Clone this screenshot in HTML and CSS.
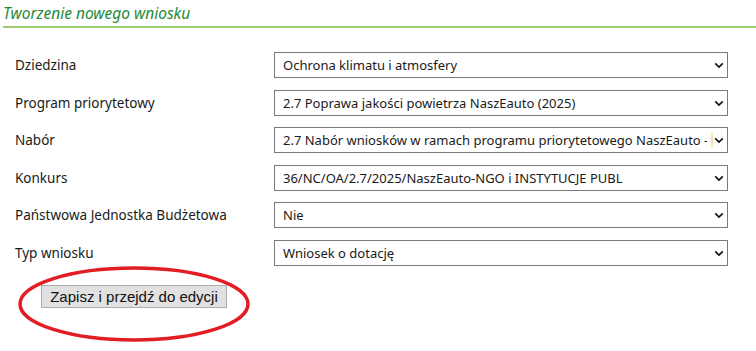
FILE: index.html
```html
<!DOCTYPE html>
<html lang="pl">
<head>
    <meta charset="UTF-8">
    <title>Tworzenie nowego wniosku</title>
    <link rel="stylesheet" href="styles.css">
</head>
<body>
    <h1 class="title">Tworzenie nowego wniosku</h1>

    <form class="form">
        <label class="label" for="dziedzina">Dziedzina</label>
        <div class="field">
            <select id="dziedzina"><option>Ochrona klimatu i atmosfery</option></select>
            <svg class="chevron" viewBox="0 0 12 8"><path d="M1.5 1.5 6 6 10.5 1.5"/></svg>
        </div>

        <label class="label" for="program">Program priorytetowy</label>
        <div class="field">
            <select id="program"><option>2.7 Poprawa jakości powietrza NaszEauto (2025)</option></select>
            <svg class="chevron" viewBox="0 0 12 8"><path d="M1.5 1.5 6 6 10.5 1.5"/></svg>
        </div>

        <label class="label" for="nabor">Nabór</label>
        <div class="field">
            <select id="nabor"><option>2.7 Nabór wniosków w ramach programu priorytetowego NaszEauto - NGO i INSTYTUCJE PUBLICZNE</option></select>
            <span class="cut"></span>
            <svg class="chevron" viewBox="0 0 12 8"><path d="M1.5 1.5 6 6 10.5 1.5"/></svg>
        </div>

        <label class="label" for="konkurs">Konkurs</label>
        <div class="field">
            <select id="konkurs"><option>36/NC/OA/2.7/2025/NaszEauto-NGO i INSTYTUCJE PUBL</option></select>
            <svg class="chevron" viewBox="0 0 12 8"><path d="M1.5 1.5 6 6 10.5 1.5"/></svg>
        </div>

        <label class="label" for="pjb">Państwowa Jednostka Budżetowa</label>
        <div class="field">
            <select id="pjb"><option>Nie</option></select>
            <svg class="chevron" viewBox="0 0 12 8"><path d="M1.5 1.5 6 6 10.5 1.5"/></svg>
        </div>

        <label class="label" for="typ">Typ wniosku</label>
        <div class="field">
            <select id="typ"><option>Wniosek o dotację</option></select>
            <svg class="chevron" viewBox="0 0 12 8"><path d="M1.5 1.5 6 6 10.5 1.5"/></svg>
        </div>
    </form>

    <div class="actions">
        <button type="button" class="save">Zapisz i przejdź do edycji</button>
        <svg class="ring" viewBox="0 0 234 78"><ellipse cx="117" cy="39" rx="114" ry="36"/></svg>
    </div>
</body>
</html>
```

FILE: styles.css
```css
html, body {
    min-height: 351px;
}

body {
    margin: 0;
    background: #ffffff;
    color: #1a1a1a;
    font-family: "Noto Sans", "Open Sans", sans-serif;
    font-size: 13px;
}

.title {
    margin: 0 0 0 3px;
    padding: 4px 0 3px 0;
    font-family: "Noto Sans", sans-serif;
    font-style: italic;
    font-weight: normal;
    font-size: 15.5px;
    line-height: 19px;
    color: #1f8a3a;
    border-bottom: 2px solid #a2cc72; /* zielona linia */
}

.form {
    display: grid;
    grid-template-columns: 259px 454px;
    row-gap: 11.5px;
    padding: 24px 0 0 15px;
}

.label {
    display: flex;
    align-items: center;
    height: 26px;
    font-size: 13.5px;
}

.field {
    position: relative;
    height: 26px;
}

.field select {
    appearance: none;
    -webkit-appearance: none;
    width: 100%;
    height: 26px;
    margin: 0;
    padding: 0 20px 0 8px;
    border: 1px solid #7a7a7a;
    border-radius: 0;
    background: #ffffff;
    color: #1a1a1a;
    font-family: "Noto Sans", "Open Sans", sans-serif;
    font-size: 13px;
}

.cut {
    position: absolute;
    right: 15px;
    top: 6px;
    width: 2px;
    height: 14px;
    background: #fbe2a8;
}

.chevron {
    position: absolute;
    right: 4px;
    top: 10px;
    width: 10px;
    height: 7px;
    fill: none;
    stroke: #111111;
    stroke-width: 2;
}

.actions {
    position: relative;
    padding: 19px 0 40px 41px;
}

.save {
    width: 186px;
    height: 23px;
    padding: 0;
    background: #e1e1e1;
    border: 1px solid #adadad;
    border-radius: 0;
    color: #111111;
    font-family: "Liberation Sans", Arial, sans-serif;
    font-size: 15px;
}

.ring {
    position: absolute;
    left: 17px;
    top: -1px;
    width: 234px;
    height: 78px;
    fill: none;
    stroke: #e21d24;
    stroke-width: 3.5;
}
```
